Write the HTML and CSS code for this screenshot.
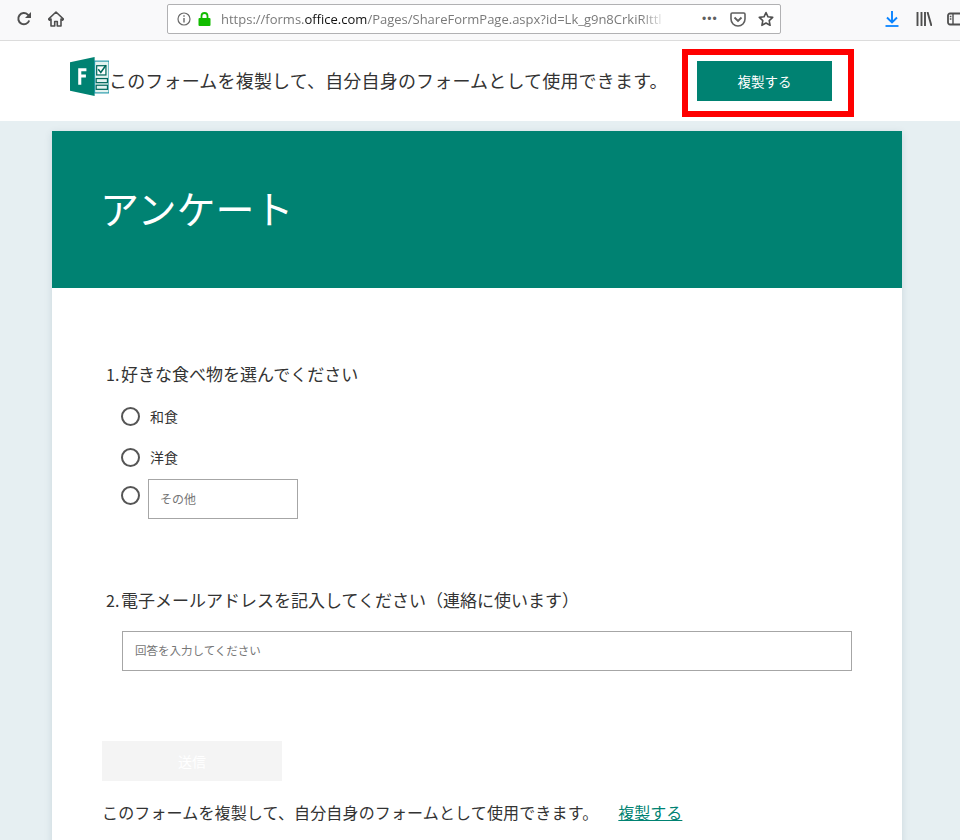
FILE: index.html
```html
<!DOCTYPE html>
<html lang="ja">
<head>
<meta charset="utf-8">
<title>アンケート</title>
<link rel="stylesheet" href="styles.css">
</head>
<body>
<div class="toolbar">
  <svg class="tb-icon reload" viewBox="0 0 16 16"><path d="M13.2 9.5A5.6 5.6 0 1 1 11.8 3.6L13.6 5.4" fill="none" stroke="#4f4f4f" stroke-width="2"/><path d="M15 1v6H9z" fill="#4f4f4f"/></svg>
  <svg class="tb-icon home" viewBox="0 0 16 16"><path d="M8 1L0.5 8.2 1.5 9.2 3 8v7h3.7v-4.500h2.600V15H13V8l1.500 1.200 1-1z" fill="none" stroke="#4f4f4f" stroke-width="1.600" stroke-linejoin="round"/></svg>
  <div class="urlbar">
    <svg class="info" viewBox="0 0 14 14"><circle cx="7" cy="7" r="6" fill="none" stroke="#6a6a6a" stroke-width="1.200"/><path d="M6.300 6h1.400v4.500H6.300zM6.300 3.300h1.400v1.500H6.300z" fill="#6a6a6a"/></svg>
    <svg class="lock" viewBox="0 0 13 14"><path d="M3.500 6V4a3 3 0 0 1 6 0v2" fill="none" stroke="#12bc00" stroke-width="1.800"/><rect x="0.500" y="6" width="12" height="8" rx="1" fill="#12bc00"/></svg>
    <div class="url"><span class="dim">https://forms.</span><span class="dark">office.com</span><span class="dim">/Pages/ShareFormPage.aspx?id=Lk_g9n8CrkiRIttl</span></div>
    <span class="dots">•••</span>
    <svg class="pocket" viewBox="0 0 16 15"><path d="M1 2.200C1 1.500 1.500 1 2.200 1h11.600c.7 0 1.200.5 1.200 1.200V7a7 7 0 0 1-14 0z" fill="none" stroke="#5f5f5f" stroke-width="1.600"/><path d="M4.500 5.500L8 9l3.500-3.500" fill="none" stroke="#5f5f5f" stroke-width="1.800"/></svg>
    <svg class="star" viewBox="0 0 16 16"><path d="M8 1.500l2 4.300 4.700.6-3.500 3.200.9 4.700L8 12l-4.100 2.300.9-4.700L1.300 6.400 6 5.800z" fill="none" stroke="#4f4f4f" stroke-width="1.600" stroke-linejoin="round"/></svg>
  </div>
  <div class="tb-right">
    <svg class="download" viewBox="0 0 14 16"><path d="M7 0v11M2 6.500L7 11.500l5-5" fill="none" stroke="#0a84ff" stroke-width="1.900"/><path d="M0.500 15h13" stroke="#0a84ff" stroke-width="1.800"/></svg>
    <svg class="library" viewBox="0 0 16 14"><path d="M1.500 0v14M5.500 0v14M9 0v14M11.500 0l4 14" fill="none" stroke="#4f4f4f" stroke-width="1.900"/></svg>
    <svg class="sidebar" viewBox="0 0 14 14"><rect x="1" y="1.500" width="16" height="11" rx="2" fill="none" stroke="#4f4f4f" stroke-width="1.800"/><path d="M6 1.500v11M2.800 4.500h1.600M2.800 7h1.600" fill="none" stroke="#4f4f4f" stroke-width="1.400"/></svg>
  </div>
</div>

<div class="notice">
  <svg class="logo" viewBox="0 0 38 38">
    <path d="M0 5L24 0v38L0 33z" fill="#008272"/>
    <path d="M8 11h8v3h-5v3h4.500v3H11v7H8z" fill="#fff"/>
    <rect x="24" y="4" width="14" height="31" fill="#e4f3f0" stroke="#0f8fa0" stroke-width="1"/>
    <rect x="26" y="8.500" width="9" height="9" fill="#fff" stroke="#00695c" stroke-width="1.200"/>
    <path d="M27.500 12l2.500 3 5-7" fill="none" stroke="#00695c" stroke-width="1.500"/>
    <rect x="25.500" y="21" width="11" height="4" fill="none" stroke="#00695c" stroke-width="1.200"/>
    <rect x="25.500" y="27.500" width="11" height="4" fill="none" stroke="#00695c" stroke-width="1.200"/>
  </svg>
  <span class="notice-text">このフォームを複製して、自分自身のフォームとして使用できます。</span>
  <div class="highlight"><button class="copy-btn">複製する</button></div>
</div>

<main class="card">
  <header class="card-head"><h1>アンケート</h1></header>
  <div class="card-body">
    <section class="q q1">
      <div class="q-title"><span class="num">1.</span>好きな食べ物を選んでください</div>
      <div class="opt opt-a"><span class="radio"></span><span class="opt-label">和食</span></div>
      <div class="opt opt-b"><span class="radio"></span><span class="opt-label">洋食</span></div>
      <div class="opt opt-c"><span class="radio"></span><span class="other">その他</span></div>
    </section>
    <section class="q q2">
      <div class="q-title"><span class="num">2.</span>電子メールアドレスを記入してください（連絡に使います）</div>
      <div class="answer">回答を入力してください</div>
    </section>
    <button class="submit">送信</button>
    <div class="foot"><span class="foot-text">このフォームを複製して、自分自身のフォームとして使用できます。</span><a class="foot-link" href="#">複製する</a></div>
  </div>
</main>
</body>
</html>
```
FILE: styles.css
```css
* { box-sizing: border-box; }
html, body { margin: 0; padding: 0; height: 840px; overflow: hidden; }
body {
  background: #e6eff2;
  font-family: "Noto Sans CJK JP", "Liberation Sans", sans-serif;
  color: #333;
}
.toolbar {
  height: 41px;
  background: #f9f9fa;
  border-bottom: 1px solid #dcdcdc;
  display: flex;
  align-items: center;
  position: relative;
}
.tb-icon { width: 16px; height: 16px; flex: none; }
.reload { margin-left: 16px; margin-top: -2px; }
.home { margin-left: 16px; margin-top: -2px; }
.urlbar {
  margin-left: 103px;
  margin-top: -2px;
  width: 614px;
  height: 30px;
  background: #fff;
  border: 1px solid #b1b1b3;
  border-radius: 2px;
  display: flex;
  align-items: center;
  padding-left: 9px;
  flex: none;
}
.info { width: 14px; height: 14px; flex: none; }
.lock { width: 13px; height: 14px; margin-left: 7px; flex: none; }
.url {
  margin-left: 10px;
  width: 446px;
  flex: none;
  overflow: hidden;
  white-space: nowrap;
  font: 13px "Open Sans", "Liberation Sans", sans-serif;
  -webkit-mask-image: linear-gradient(to right, #000 94%, transparent);
  mask-image: linear-gradient(to right, #000 94%, transparent);
}
.dim { color: #7a7a7a; }
.dark { color: #111; }
.dots { margin-left: 35px; font: 12px "Liberation Sans", sans-serif; color: #5f5f5f; letter-spacing: 1px; }
.pocket { width: 16px; height: 15px; margin-left: 12px; flex: none; }
.star { width: 16px; height: 16px; margin-left: 12px; flex: none; }
.tb-right { margin-left: 104px; margin-top: -2px; display: flex; align-items: center; flex: none; }
.download { width: 14px; height: 16px; }
.library { width: 16px; height: 14px; margin-left: 17px; }
.sidebar { width: 14px; height: 14px; margin-left: 15px; overflow: hidden; }

.notice {
  height: 80px;
  background: #fff;
  display: flex;
  align-items: flex-start;
}
.logo { width: 39px; height: 39px; margin: 16px 0 0 70px; flex: none; }
.notice-text { margin: 26px 0 0 0; font-size: 18px; letter-spacing: 0.180px; line-height: 26px; width: 573px; white-space: nowrap; color: #333; flex: none; }
.highlight {
  width: 172px;
  height: 68px;
  margin-top: 8px;
  border: 6px solid #fe0000;
  padding: 6px 0 0 9px;
  flex: none;
}
.copy-btn {
  display: block;
  width: 135px;
  height: 40px;
  border: 0;
  padding: 0;
  background: #008272;
  color: #fff;
  font: 13.500px "Noto Sans CJK JP", sans-serif;
}

.card {
  width: 850px;
  margin: 10px 0 0 52px;
  background: #fff;
  box-shadow: 0 2px 8px rgba(0, 60, 80, 0.12);
  height: 720px;
}
.card-head { height: 157px; background: #008272; padding: 50px 48px 0; }
.card-head h1 { margin: 0; color: #fff; font-size: 39px; line-height: 52px; font-weight: 400; }
.card-body { padding: 73px 50px 0; position: relative; }
.q-title { font-size: 17px; line-height: 26px; color: #333; padding-left: 4px; display: flex; white-space: nowrap; }
.num { width: 15px; flex: none; text-align: left; font-size: 16px; }
.opt { display: flex; align-items: flex-start; padding-left: 19px; }
.opt-a { margin-top: 20px; height: 25px; }
.opt-b { margin-top: 16px; height: 20px; }
.opt-c { margin-top: 11px; }
.radio { width: 19px; height: 19px; border: 2px solid #555; border-radius: 50%; flex: none; background: #fff; }
.opt-label { margin-left: 10px; font-size: 14px; line-height: 19px; color: #333; }
.opt-c .radio { margin-top: 7px; }
.other {
  margin-left: 8px;
  width: 150px;
  height: 40px;
  border: 1px solid #a6a6a6;
  padding-left: 11px;
  font-size: 12px;
  line-height: 37px;
  color: #767676;
}
.q2 { margin-top: 68px; }
.answer {
  margin: 18px 0 0 20px;
  width: 730px;
  height: 40px;
  border: 1px solid #a6a6a6;
  padding-left: 12px;
  font-size: 11.500px;
  line-height: 37px;
  color: #767676;
}
.submit {
  display: block;
  margin-top: 70px;
  width: 180px;
  height: 40px;
  border: 0;
  padding: 0;
  background: #f4f4f4;
  color: #fff;
  font: 14px "Noto Sans CJK JP", sans-serif;
}
.foot { margin-top: 18px; font-size: 16px; line-height: 26px; color: #333; display: flex; white-space: nowrap; }
.foot-text { letter-spacing: 0.150px; }
.foot-link { margin-left: 20px; color: #008272; text-decoration: underline; }
```
